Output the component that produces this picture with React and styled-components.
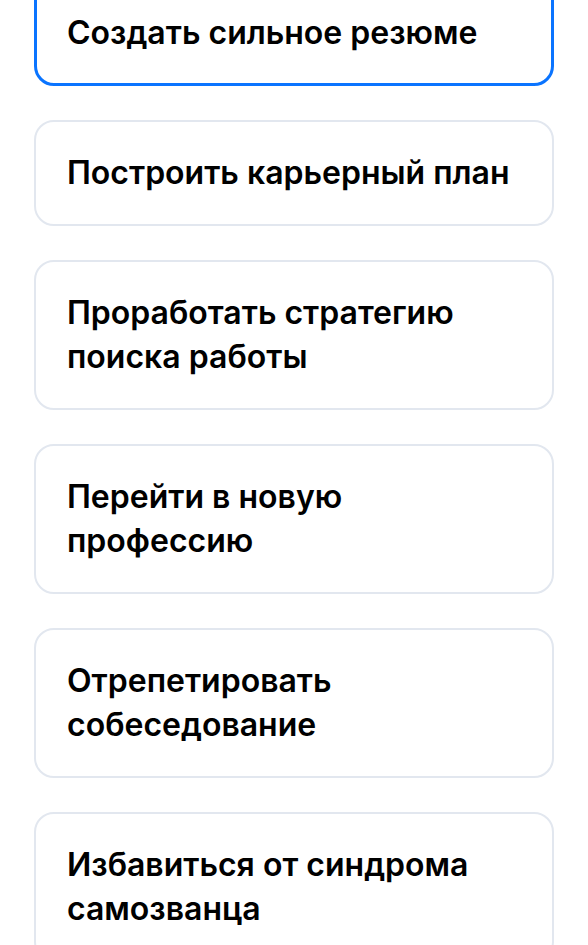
import styled, { createGlobalStyle } from 'styled-components';

const GlobalStyle = createGlobalStyle`
  html, body {
    margin: 0;
    padding: 0;
    background: #ffffff;
  }
  body {
    font-family: Inter, "Noto Sans", sans-serif;
    -webkit-font-smoothing: antialiased;
  }
`;

const List = styled.div`
  display: flex;
  flex-direction: column;
  gap: 34px;
  padding: 0 34px 40px 34px;
  margin-top: -20px;
`;

const Card = styled.button`
  display: block;
  width: 100%;
  text-align: left;
  background: #ffffff;
  border: ${p => (p.$active ? '3px solid #0a74ff' : '2px solid #e2e7ef')};
  border-radius: 20px;
  padding: ${p => (p.$active ? '28px 30px' : '29px 31px')};
  font-family: inherit;
  cursor: pointer;
`;

const Label = styled.span`
  display: block;
  font-size: 32px;
  line-height: 44px;
  font-weight: 600;
  color: #000000;
`;

const goals = [
  'Создать сильное резюме',
  'Построить карьерный план',
  'Проработать стратегию поиска работы',
  'Перейти в новую профессию',
  'Отрепетировать собеседование',
  'Избавиться от синдрома самозванца',
];

export default function App() {
  return (
    <>
      <GlobalStyle />
      <List>
        {goals.map((g, i) => (
          <Card key={g} $active={i === 0}>
            <Label>{g}</Label>
          </Card>
        ))}
      </List>
    </>
  );
}
